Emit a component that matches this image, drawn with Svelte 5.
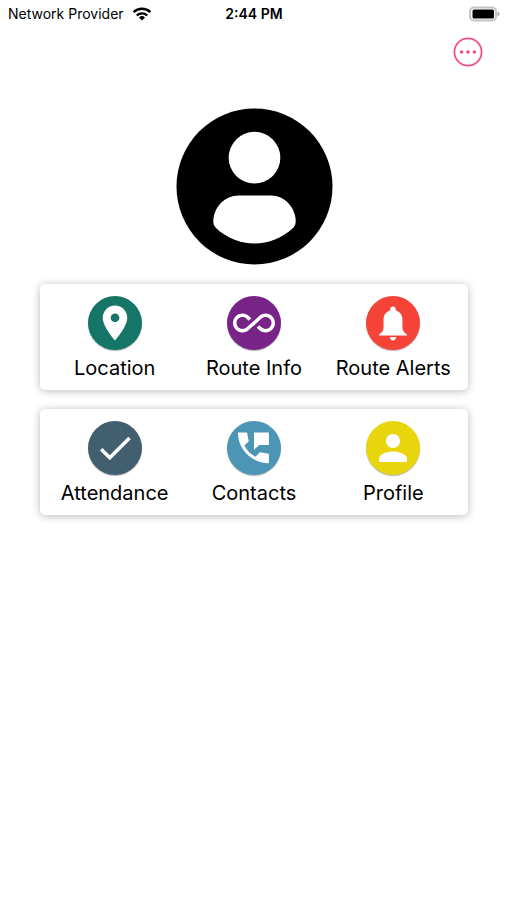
<script lang="ts">
	const rows = [
		[
			{ id: 'location', label: 'Location', color: '#157567' },
			{ id: 'route', label: 'Route Info', color: '#782388' },
			{ id: 'alerts', label: 'Route Alerts', color: '#f54437' }
		],
		[
			{ id: 'attendance', label: 'Attendance', color: '#425f6f' },
			{ id: 'contacts', label: 'Contacts', color: '#4c95b5' },
			{ id: 'profile', label: 'Profile', color: '#e8d50c' }
		]
	];

	const icons: Record<string, string> = {
		location: 'M12 2C8.13 2 5 5.13 5 9c0 5.25 7 13 7 13s7-7.75 7-13c0-3.87-3.13-7-7-7zm0 9.5c-1.38 0-2.5-1.12-2.5-2.5s1.12-2.5 2.5-2.5 2.5 1.12 2.5 2.5-1.12 2.5-2.5 2.5z',
		route: 'M18.6 6.62c-1.44 0-2.8.56-3.77 1.53L12 10.66 10.48 12h.01L7.8 14.39c-.64.64-1.49.99-2.4.99-1.87 0-3.39-1.51-3.39-3.38S3.53 8.62 5.4 8.62c.91 0 1.76.35 2.44 1.03l1.13 1 1.51-1.34L9.22 8.2C8.2 7.18 6.84 6.62 5.4 6.62 2.42 6.62 0 9.04 0 12s2.42 5.38 5.4 5.38c1.44 0 2.8-.56 3.77-1.53l2.83-2.5.01.01L13.52 12h-.01l2.69-2.39c.64-.64 1.49-.99 2.4-.99 1.87 0 3.39 1.51 3.39 3.38s-1.52 3.38-3.39 3.38c-.9 0-1.76-.35-2.44-1.03l-1.14-1.01-1.51 1.34 1.27 1.12c1.02 1.01 2.37 1.57 3.82 1.57 2.98 0 5.4-2.41 5.4-5.38s-2.42-5.38-5.4-5.38z',
		alerts: 'M12 2.5c-.9 0-1.6.7-1.6 1.6v.8C7.9 5.7 6.6 7.6 6.6 10v4c0 2.5-.9 3.6-2.6 4.5v.6h16v-.6c-1.7-.9-2.6-2-2.6-4.500v-4c0-2.400-1.300-4.300-3.800-5.100v-.8c0-.9-.7-1.600-1.600-1.600zM10.200 20h3.600c0 1.100-.8 2-1.800 2s-1.800-.9-1.800-2z',
		attendance: 'M9 16.2L4.8 12l-1.4 1.4L9 19 21 7l-1.4-1.4L9 16.2z',
		contacts: 'M20.5 15.3l-5.2-.9-2.5 2.6c-2.800-1.440-4.900-3.600-6.300-6.400L9 8.100l-1-4.900H2.800C2.800 13 10.700 20.700 20.500 20.700zM12 3.200v9.800l3-2.700h5.500V3.200z',
		profile: 'M12 12c2.21 0 4-1.79 4-4s-1.79-4-4-4-4 1.79-4 4 1.79 4 4 4zm0 2c-2.67 0-8 1.34-8 4v2h16v-2c0-2.66-5.33-4-8-4z'
	};
</script>

<div class="screen">
	<header class="status">
		<div class="carrier">
			<span>Network Provider</span>
			<svg width="20" height="14" viewBox="0 0 20 14" aria-hidden="true">
				<g fill="none" stroke="#000" stroke-width="2.4">
					<path d="M1.6 5.2a12 12 0 0 1 16.8 0" />
					<path d="M4.8 8.5a7.4 7.4 0 0 1 10.4 0" />
				</g>
				<path d="M10 13.6l-3-3.1a4.3 4.3 0 0 1 6 0z" />
			</svg>
		</div>
		<time>2:44 PM</time>
		<div class="battery">
			<svg width="31" height="16" viewBox="0 0 31 16" aria-hidden="true">
				<rect x="1" y="1.5" width="26" height="13" rx="4" fill="#fff" stroke="#c4c4c4" stroke-width="2" />
				<rect x="3.5" y="3.5" width="21.5" height="9" rx="1.5" />
				<path d="M28.5 5.5c2.6 1 2.6 4 0 5z" fill="#aaa" />
			</svg>
		</div>
	</header>

	<div class="toolbar">
		<button class="more" aria-label="More options">
			<svg width="30" height="30" viewBox="0 0 30 30" aria-hidden="true">
				<circle cx="15" cy="15" r="13.6" fill="none" stroke="#ee4f86" stroke-width="1.8" />
				<g fill="#ee4f86">
					<circle cx="8.6" cy="15" r="1.8" />
					<circle cx="15" cy="15" r="1.8" />
					<circle cx="21.4" cy="15" r="1.8" />
				</g>
			</svg>
		</button>
	</div>

	<main>
		<svg class="avatar" width="157" height="157" viewBox="0 0 158 158" role="img" aria-label="User">
			<circle cx="79" cy="79" r="78.5" />
			<circle cx="79" cy="50" r="26" fill="#fff" />
			<path d="M63 88h33c13 0 24.5 12 24.5 26.5q0 3.500-2.500 6c-22 21-56 21-78 0q-2.500-2.500-2.500-6C37.500 100 49 88 63 88z" fill="#fff" />
		</svg>

		{#each rows as row}
			<nav class="card">
				{#each row as item}
					<button class="item">
						<span class="disc" style:background={item.color}>
							<svg width="42" height="42" viewBox="0 0 24 24" aria-hidden="true">
								<path d={icons[item.id]} />
							</svg>
						</span>
						<span>{item.label}</span>
					</button>
				{/each}
			</nav>
		{/each}
	</main>
</div>

<style>
	:global(body) {
		margin: 0;
		background: #fff;
	}

	.screen {
		min-height: 100vh;
		color: #000;
		font-family: Inter, Roboto, sans-serif;
	}

	.status {
		display: grid;
		grid-template-columns: 1fr auto 1fr;
		align-items: center;
		height: 27px;
		padding: 0 7px 0 8px;
		font-size: 14px;
	}

	.carrier {
		display: flex;
		align-items: center;
		gap: 8px;
	}

	time {
		font-weight: 600;
	}

	.battery {
		display: flex;
		justify-content: flex-end;
	}

	.toolbar {
		display: flex;
		justify-content: flex-end;
		padding: 10px 24px 0;
	}

	button {
		padding: 0;
		border: none;
		background: none;
		color: inherit;
		font: inherit;
		cursor: pointer;
	}

	.more {
		height: 30px;
	}

	svg {
		display: block;
	}

	main {
		display: flex;
		flex-direction: column;
		gap: 19px;
		padding: 41px 39px 0 40px;
	}

	.avatar {
		align-self: center;
	}

	.card {
		display: grid;
		grid-template-columns: repeat(3, 1fr);
		padding: 12px 5px 8px;
		border-radius: 5px;
		background: #fff;
		box-shadow: 0 1px 8px rgba(0, 0, 0, 0.28);
	}

	.item {
		display: flex;
		flex-direction: column;
		align-items: center;
		gap: 4px;
		font-size: 20px;
		line-height: 28px;
		white-space: nowrap;
	}

	.disc {
		display: flex;
		align-items: center;
		justify-content: center;
		width: 54px;
		height: 54px;
		border-radius: 50%;
		box-shadow: 0 1px 1px rgba(0, 0, 0, 0.3);
	}

	.disc svg {
		fill: #fff;
	}
</style>
